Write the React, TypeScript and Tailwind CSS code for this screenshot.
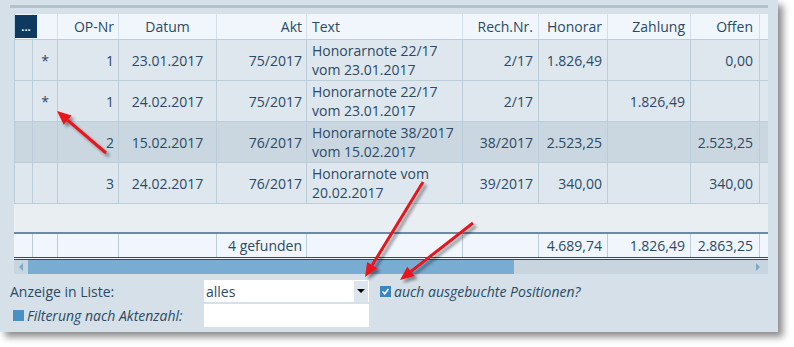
import React from 'react';

const cols = 'grid grid-cols-[18px_25px_61px_98px_90px_156px_76px_69px_83px_69px_9px]';

interface Row {
  mark: string;
  op: string;
  datum: string;
  akt: string;
  text: string[];
  rech: string;
  honorar: string;
  zahlung: string;
  offen: string;
  selected?: boolean;
}

const rows: Row[] = [
  { mark: '*', op: '1', datum: '23.01.2017', akt: '75/2017', text: ['Honorarnote 22/17', 'vom 23.01.2017'], rech: '2/17', honorar: '1.826,49', zahlung: '', offen: '0,00' },
  { mark: '*', op: '1', datum: '24.02.2017', akt: '75/2017', text: ['Honorarnote 22/17', 'vom 23.01.2017'], rech: '2/17', honorar: '', zahlung: '1.826,49', offen: '' },
  { mark: '', op: '2', datum: '15.02.2017', akt: '76/2017', text: ['Honorarnote 38/2017', 'vom 15.02.2017'], rech: '38/2017', honorar: '2.523,25', zahlung: '', offen: '2.523,25', selected: true },
  { mark: '', op: '3', datum: '24.02.2017', akt: '76/2017', text: ['Honorarnote vom', '20.02.2017'], rech: '39/2017', honorar: '340,00', zahlung: '', offen: '340,00' },
];

const cell = 'border-r border-[#bccdda] flex items-center';

function Arrow({ x1, y1, x2, y2 }: { x1: number; y1: number; x2: number; y2: number }) {
  const a = Math.atan2(y2 - y1, x2 - x1);
  const len = 14;
  const w = 6;
  const bx = x2 - len * Math.cos(a);
  const by = y2 - len * Math.sin(a);
  const p1 = `${bx + w * Math.sin(a)},${by - w * Math.cos(a)}`;
  const p2 = `${bx - w * Math.sin(a)},${by + w * Math.cos(a)}`;
  return (
    <g>
      <line x1={x1} y1={y1} x2={bx} y2={by} stroke="#e8141c" strokeWidth={3} />
      <polygon points={`${x2},${y2} ${p1} ${p2}`} fill="#e8141c" />
    </g>
  );
}

export default function App() {
  return (
    <div className="relative w-[794px] h-[347px] bg-white font-['Open_Sans',sans-serif] text-[14px] text-[#2b4a66] overflow-hidden">
      <div className="w-[778px] h-[332px] bg-[#d5e0e8] shadow-[5px_5px_7px_rgba(0,0,0,0.45)] pt-[5px] pl-[10px]">
        <div className="w-[758px] h-[3px] bg-[#b5c2cb]" />

        <div className="relative mt-[6px] ml-[4px] w-[754px] border-l border-[#bccdda]">
          {/* header */}
          <div className={`${cols} h-[26px] bg-[#f0f6fc] border-b border-[#bccdda]`}>
            <div className="border-r border-[#d3dfe9]" />
            <div className="border-r border-[#d3dfe9]" />
            <div className="border-r border-[#d3dfe9] flex items-center justify-end pr-[4px]">OP-Nr</div>
            <div className="border-r border-[#d3dfe9] flex items-center justify-center">Datum</div>
            <div className="border-r border-[#d3dfe9] flex items-center justify-end pr-[4px]">Akt</div>
            <div className="border-r border-[#d3dfe9] flex items-center pl-[5px]">Text</div>
            <div className="border-r border-[#d3dfe9] flex items-center justify-end pr-[5px]">Rech.Nr.</div>
            <div className="border-r border-[#d3dfe9] flex items-center justify-end pr-[5px]">Honorar</div>
            <div className="border-r border-[#d3dfe9] flex items-center justify-end pr-[5px]">Zahlung</div>
            <div className="border-r border-[#d3dfe9] flex items-center justify-end pr-[6px]">Offen</div>
            <div />
          </div>
          <div className="absolute left-0 top-[1px] w-[22px] h-[23px] bg-[#0f3a5f] text-white text-[11px] font-bold flex items-center justify-center leading-none">...</div>

          {/* data rows */}
          {rows.map((r, i) => (
            <div key={i} className={`${cols} h-[41px] border-b border-[#bccdda] leading-[19px] ${r.selected ? 'bg-[#cad7e1]' : 'bg-[#dfe7ee]'}`}>
              <div className={cell} />
              <div className={`${cell} justify-center`}>{r.mark}</div>
              <div className={`${cell} justify-end pr-[4px]`}>{r.op}</div>
              <div className={`${cell} justify-center`}>{r.datum}</div>
              <div className={`${cell} justify-end pr-[4px]`}>{r.akt}</div>
              <div className={`${cell} flex-col !items-start justify-center pl-[5px]`}>
                {r.text.map((t, j) => (
                  <span key={j}>{t}</span>
                ))}
              </div>
              <div className={`${cell} justify-end pr-[5px]`}>{r.rech}</div>
              <div className={`${cell} justify-end pr-[5px]`}>{r.honorar}</div>
              <div className={`${cell} justify-end pr-[5px]`}>{r.zahlung}</div>
              <div className={`${cell} justify-end pr-[6px]`}>{r.offen}</div>
              <div />
            </div>
          ))}

          {/* empty area */}
          <div className="h-[28px] bg-[#e8eef2] -ml-px" />

          {/* footer */}
          <div className={`${cols} h-[28px] bg-[#f0f6fc] border-t-2 border-t-[#6d8aa3] border-b-[3px] border-b-[#1f4e78] border-double -ml-px pl-px`}>
            <div className={cell} />
            <div className={cell} />
            <div className={cell} />
            <div className={cell} />
            <div className={`${cell} justify-end pr-[4px]`}>4 gefunden</div>
            <div className={cell} />
            <div className={cell} />
            <div className={`${cell} justify-end pr-[5px]`}>4.689,74</div>
            <div className={`${cell} justify-end pr-[5px]`}>1.826,49</div>
            <div className={`${cell} justify-end pr-[6px]`}>2.863,25</div>
            <div />
          </div>

          {/* scrollbar */}
          <div className="flex h-[14px] bg-[#c9d5de] -ml-px">
            <div className="w-[14px] flex items-center justify-center">
              <div className="w-0 h-0 border-y-[4px] border-y-transparent border-r-[4px] border-r-[#7aa8cc]" />
            </div>
            <div className="w-[486px] bg-[#78acd2]" />
            <div className="flex-1 flex items-center justify-end pr-[8px]">
              <div className="w-0 h-0 border-y-[4px] border-y-transparent border-l-[4px] border-l-[#7aa8cc]" />
            </div>
          </div>
        </div>

        {/* form */}
        <div className="mt-[6px] flex flex-col gap-[2px]">
          <div className="flex items-center h-[22px]">
            <span className="w-[194px]">Anzeige in Liste:</span>
            <div className="w-[165px] h-[22px] bg-white flex items-center">
              <span className="flex-1 pl-[2px]">alles</span>
              <div className="w-[14px] h-[21px] mr-px bg-[#dde5ec] flex items-center justify-center">
                <div className="w-0 h-0 border-x-[4px] border-x-transparent border-t-[4px] border-t-black" />
              </div>
            </div>
            <div className="ml-[11px] w-[11px] h-[11px] bg-[#3a86c0] flex items-center justify-center">
              <svg width="9" height="9" viewBox="0 0 9 9">
                <path d="M1.5 4.5 L3.7 6.8 L7.5 2" fill="none" stroke="white" strokeWidth="1.6" />
              </svg>
            </div>
            <span className="ml-[3px] italic">auch ausgebuchte Positionen?</span>
          </div>
          <div className="flex items-center h-[23px]">
            <div className="ml-[3px] w-[11px] h-[11px] bg-[#4a90c4]" />
            <span className="ml-[3px] w-[177px] italic">Filterung nach Aktenzahl:</span>
            <div className="w-[165px] h-[23px] bg-white" />
          </div>
        </div>
      </div>

      <svg className="absolute inset-0 pointer-events-none" width="794" height="347">
        <defs>
          <filter id="sh" x="-20%" y="-20%" width="140%" height="140%">
            <feDropShadow dx="3" dy="3" stdDeviation="1.5" floodColor="#000" floodOpacity="0.4" />
          </filter>
        </defs>
        <g filter="url(#sh)">
          <Arrow x1={106} y1={153} x2={57} y2={111} />
          <Arrow x1={423} y1={182} x2={365} y2={277} />
          <Arrow x1={473} y1={223} x2={400} y2={280} />
        </g>
      </svg>
    </div>
  );
}
